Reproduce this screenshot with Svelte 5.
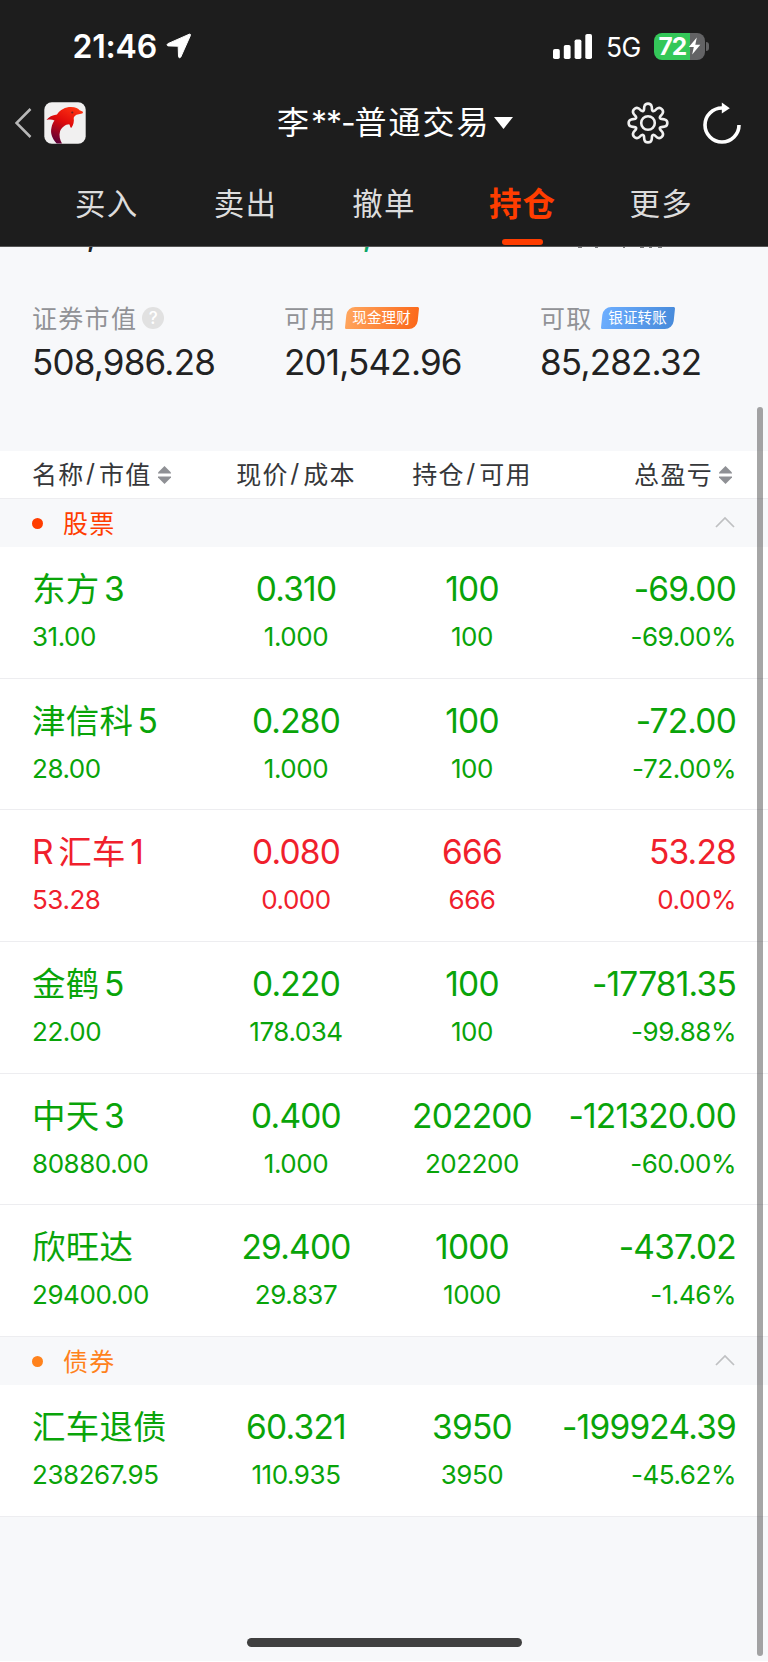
<script>
    let tabs = ['买入', '卖出', '撤单', '持仓', '更多'];
    let activeTab = '持仓';

    let groups = [
        {
            name: '股票',
            color: 'red',
            open: true,
            items: [
                { name: '东方3', value: '31.00', price: '0.310', cost: '1.000', amount: '100', usable: '100', profit: '-69.00', percent: '-69.00%' },
                { name: '津信科5', value: '28.00', price: '0.280', cost: '1.000', amount: '100', usable: '100', profit: '-72.00', percent: '-72.00%' },
                { name: 'R汇车1', value: '53.28', price: '0.080', cost: '0.000', amount: '666', usable: '666', profit: '53.28', percent: '0.00%' },
                { name: '金鹤5', value: '22.00', price: '0.220', cost: '178.034', amount: '100', usable: '100', profit: '-17781.35', percent: '-99.88%' },
                { name: '中天3', value: '80880.00', price: '0.400', cost: '1.000', amount: '202200', usable: '202200', profit: '-121320.00', percent: '-60.00%' },
                { name: '欣旺达', value: '29400.00', price: '29.400', cost: '29.837', amount: '1000', usable: '1000', profit: '-437.02', percent: '-1.46%' }
            ]
        },
        {
            name: '债券',
            color: 'orange',
            open: true,
            items: [
                { name: '汇车退债', value: '238267.95', price: '60.321', cost: '110.935', amount: '3950', usable: '3950', profit: '-199924.39', percent: '-45.62%' }
            ]
        }
    ];

    function toggleGroup(group) {
        group.open = !group.open;
        groups = groups;
    }

    // latin and chinese parts, so there can be a small gap between them
    function splitName(name) {
        return name.match(/[A-Za-z0-9]+|[^A-Za-z0-9]+/g);
    }
</script>

{#snippet sortIcon()}
    <svg class="sort-icon" width="13" height="18" viewBox="0 0 13 18" aria-hidden="true">
        <path d="M6.5 0 13 6.5V7.6H0V6.500Z" />
        <path d="M6.500 18 13 11.500V10.400H0V11.500Z" />
    </svg>
{/snippet}

<main>
    <header>
        <div class="status-bar">
            <span class="clock">21:46</span>
            <svg class="location" width="26" height="26" viewBox="0 0 26 26" aria-hidden="true">
                <path d="M23.300 1.200 1.800 10.700C.7 11.300 1 12.800 2.200 12.900L12.200 13.200 12.500 23.500C12.600 24.900 14.200 25.200 14.800 24L24.400 2.500C24.800 1.500 24.200.9 23.300 1.200Z" fill="#fff" stroke="#fff" stroke-width="1" />
            </svg>
            <svg class="signal" width="39" height="25" viewBox="0 0 39 25" fill="#fff" aria-hidden="true">
                <rect x="0" y="15" width="6.800" height="10" rx="1.800" />
                <rect x="10.800" y="11" width="6.800" height="14" rx="1.800" />
                <rect x="21.600" y="5.500" width="6.800" height="19.500" rx="1.800" />
                <rect x="32.300" y="0" width="6.700" height="25" rx="1.800" />
            </svg>
            <span class="network">5G</span>
            <div class="battery">
                <span>72</span>
                <svg width="13" height="18" viewBox="0 0 13 18" aria-hidden="true">
                    <path d="M8.800.5.8 10H5.800L4.200 17.500 12.300 7.700H7.300Z" fill="#fff" />
                </svg>
            </div>
            <i class="battery-cap"></i>
        </div>

        <nav class="title-bar">
            <svg class="back" width="17" height="30" viewBox="0 0 17 30" aria-hidden="true">
                <path d="M15.500 1 1.500 15 15.500 29" fill="none" stroke="#b8b8b8" stroke-width="2.500" />
            </svg>
            <svg class="logo" width="42" height="42" viewBox="0 0 42 42" aria-hidden="true">
                <defs>
                    <linearGradient id="dolphin" x1="0.800" y1="0" x2="0.300" y2="1">
                        <stop offset="0" stop-color="#ff3412" />
                        <stop offset=".45" stop-color="#e00b0b" />
                        <stop offset="1" stop-color="#5a0038" />
                    </linearGradient>
                </defs>
                <rect x=".3" y=".3" width="41.400" height="41.400" rx="7.500" fill="#f1f0f0" />
                <path d="M2.500 18C4.500 15 8.500 13 13 12.500 16 7.500 21.500 5 27 5 31.500 5 34.500 6.500 35.500 8.300L38.500 9.500C39.300 10.200 39 11.200 38 11.500L32.500 12.800C31 14 30 14.800 29.700 16 30.300 19.500 29.500 23 27.200 26 25.800 25.200 26.300 23.400 25.200 22.300 21.500 22.400 17.300 25.500 16 29.500 14.800 33.500 16 38 18 41.600H12.700C8.500 37 6 31.500 7.500 25.500 8 22.800 9 20.300 10.500 18.500 8 17.300 5.500 17.300 2.500 18Z" fill="url(#dolphin)" />
                <circle cx="28.300" cy="10.500" r="1.100" fill="#722" />
            </svg>
            <h1>李<span>**-</span>普通交易</h1>
            <svg class="caret" width="19" height="12" viewBox="0 0 19 12" aria-hidden="true">
                <path d="M0 0H19L9.500 12Z" fill="#fff" />
            </svg>
            <svg class="gear" width="42" height="42" viewBox="0 0 42 42" fill="none" stroke="#f0f0f0" stroke-width="2.600" aria-hidden="true">
                <path d="M16.800 8.300C17.300 6.900 17 5.500 17.400 4.200 18.300.8 23.700.8 24.600 4.200 25 5.500 24.700 6.900 25.200 8.300 25.700 9.200 26.500 9.300 27.300 8.900 28.500 8.300 29.300 7 30.500 6.400 33.600 4.800 37.200 8.400 35.600 11.500 35 12.700 33.700 13.500 33.100 14.700 32.700 15.500 32.800 16.300 33.700 16.800 35.100 17.300 36.500 17 37.800 17.400 41.200 18.300 41.200 23.700 37.800 24.600 36.500 25 35.100 24.700 33.700 25.200 32.800 25.700 32.700 26.500 33.100 27.300 33.700 28.500 35 29.300 35.600 30.500 37.200 33.600 33.600 37.200 30.500 35.600 29.300 35 28.500 33.700 27.300 33.100 26.500 32.700 25.700 32.800 25.200 33.700 24.700 35.100 25 36.500 24.600 37.800 23.700 41.200 18.300 41.200 17.400 37.800 17 36.500 17.300 35.100 16.800 33.700 16.300 32.800 15.500 32.700 14.700 33.100 13.500 33.700 12.700 35 11.500 35.600 8.400 37.200 4.800 33.600 6.400 30.500 7 29.300 8.300 28.500 8.900 27.300 9.300 26.500 9.200 25.700 8.300 25.200 6.900 24.700 5.500 25 4.200 24.600.8 23.700.8 18.300 4.200 17.400 5.500 17 6.900 17.300 8.300 16.800 9.200 16.300 9.300 15.500 8.900 14.700 8.300 13.500 7 12.700 6.400 11.500 4.800 8.400 8.400 4.800 11.500 6.400 12.700 7 13.500 8.300 14.700 8.900 15.500 9.300 16.300 9.200 16.800 8.300Z" />
                <circle cx="21" cy="21" r="6.800" />
            </svg>
            <svg class="refresh" width="40" height="42" viewBox="0 0 40 42" aria-hidden="true">
                <path d="M37 23A17 17 0 1 1 20 6H24" fill="none" stroke="#fff" stroke-width="3.600" />
                <path d="M19.800 .5 27.800 6.200 19.800 11.500Z" fill="#fff" />
            </svg>
        </nav>

        <div class="tabs">
            {#each tabs as tab}
                <button class:active={tab === activeTab} on:click={() => (activeTab = tab)}>{tab}</button>
            {/each}
        </div>
    </header>

    <!-- bottom edge of the totals row, scrolled under the header -->
    <div class="scrolled-row">
        <span class="total">,</span>
        <span class="today">,</span>
        <svg width="90" height="2" viewBox="0 0 90 2" aria-hidden="true">
            <path d="M2 .5H6M19 .5H22M47 .5H49M64 .5H68M73 .5H76M82 .5H86" stroke="#77787a" />
        </svg>
    </div>

    <section class="summary">
        <div class="asset">
            <p>证券市值<i class="help">?</i></p>
            <strong>508,986.28</strong>
        </div>
        <div class="asset">
            <p>可用<span class="badge orange">现金理财</span></p>
            <strong>201,542.96</strong>
        </div>
        <div class="asset">
            <p>可取<span class="badge blue">银证转账</span></p>
            <strong>85,282.32</strong>
        </div>
    </section>

    <section class="holdings">
        <div class="grid table-head">
            <span>名称<i>/</i>市值{@render sortIcon()}</span>
            <span>现价<i>/</i>成本</span>
            <span>持仓<i>/</i>可用</span>
            <span>总盈亏{@render sortIcon()}</span>
        </div>

        {#each groups as group}
            <button class="group {group.color}" on:click={() => toggleGroup(group)}>
                <i class="dot"></i>
                <span>{group.name}</span>
                <svg class:closed={!group.open} width="20" height="12" viewBox="0 0 20 12" aria-hidden="true">
                    <path d="M1 11 10 2 19 11" fill="none" stroke="#bfc0c2" stroke-width="1.700" />
                </svg>
            </button>

            {#if group.open}
                {#each group.items as item}
                    <div class="grid item" class:up={!item.profit.startsWith('-')}>
                        <div>
                            <b class="name">
                                {#each splitName(item.name) as part}
                                    <span>{part}</span>
                                {/each}
                            </b>
                            <small>{item.value}</small>
                        </div>
                        <div><b>{item.price}</b><small>{item.cost}</small></div>
                        <div><b>{item.amount}</b><small>{item.usable}</small></div>
                        <div class="profit"><b>{item.profit}</b><small>{item.percent}</small></div>
                    </div>
                {/each}
            {/if}
        {/each}
    </section>

    <i class="scrollbar"></i>
    <i class="home-indicator"></i>
</main>

<style>
    :global(body) {
        margin: 0;
        background: #f7f8fa;
    }

    main {
        position: relative;
        box-sizing: border-box;
        width: 768px;
        height: 1662px;
        overflow: hidden;
        background: #f7f8fa;
        border-bottom: 1px solid #fff;
        font-family: Inter, "Noto Sans CJK SC", sans-serif;
    }

    h1, p {
        margin: 0;
        font-weight: 400;
    }

    svg {
        display: block;
        flex: none;
    }

    button {
        border: none;
        padding: 0;
        background: none;
        font-family: inherit;
    }

    header {
        box-sizing: border-box;
        height: 247px;
        background: #1d1d1d;
        border-bottom: 1px solid #555;
        color: #fff;
    }

    .status-bar {
        display: flex;
        align-items: center;
        height: 92px;
        padding-left: 72.500px;

        & .clock {
            width: 93.500px;
            font-size: 32px;
            font-weight: 600;
            letter-spacing: -.2px;
        }

        & .signal {
            margin-left: 361px;
        }

        & .network {
            width: 47.500px;
            margin: 1px 0 0 14px;
            font-size: 26.500px;
            letter-spacing: -.5px;
        }
    }

    .battery {
        display: flex;
        align-items: center;
        width: 51px;
        height: 27px;
        border-radius: 8px;
        background: linear-gradient(to right, #34c759 36px, #636365 36px);

        & span {
            width: 29.500px;
            margin-left: 5px;
            font-size: 24.500px;
            font-weight: 700;
            line-height: 27px;
            letter-spacing: -1px;
        }
    }

    .battery-cap {
        width: 3px;
        height: 9px;
        margin-left: 1.500px;
        border-radius: 0 4px 4px 0;
        background: #636365;
    }

    .title-bar {
        display: flex;
        align-items: center;
        height: 62px;
        padding-left: 15px;

        & .logo {
            margin-left: 12px;
        }

        & h1 {
            width: 216px;
            margin-left: 191px;
            font-size: 32px;
            line-height: 62px;
            letter-spacing: 2px;
            white-space: nowrap;
        }

        & h1 span {
            letter-spacing: -1.100px;
        }

        & .caret {
            margin-left: 1px;
        }

        & .gear {
            margin-left: 114px;
        }

        & .refresh {
            margin-left: 33px;
        }
    }

    .tabs {
        display: flex;
        height: 92px;
        padding: 0 37.500px;

        & button {
            position: relative;
            flex: 1;
            padding-top: 3px;
            color: #dcdcdc;
            font-size: 30.500px;
            letter-spacing: 1.200px;
        }

        & .active {
            color: #ff3d00;
            font-size: 32.500px;
            font-weight: 700;
        }

        & .active::after {
            content: '';
            position: absolute;
            left: 50%;
            bottom: 1px;
            width: 41px;
            height: 6px;
            margin-left: -20.500px;
            border-radius: 3px;
            background: #ff3d00;
        }
    }

    .scrolled-row {
        display: flex;
        align-items: flex-start;
        height: 5px;
        padding-left: 86px;
        overflow: hidden;
        font-size: 35px;
        line-height: 16px;

        & span {
            width: 276px;
            margin-top: -20px;
            color: #222;
        }

        & .today {
            width: 214px;
            color: #0aa566;
        }
    }

    .summary {
        display: grid;
        grid-template-columns: 252px 256px 1fr;
        height: 153px;
        padding: 46px 0 0 32px;

        & p {
            display: flex;
            align-items: center;
            height: 38px;
            color: #919296;
            font-size: 25px;
            letter-spacing: 1.300px;
        }

        & strong {
            display: block;
            margin-top: 2px;
            color: #222;
            font-size: 35px;
            font-weight: 400;
            line-height: 48px;
            letter-spacing: -.8px;
        }
    }

    .help {
        width: 22px;
        margin: 2px 0 0 5px;
        border-radius: 50%;
        background: #e1e1e1;
        color: #fff;
        font-size: 17px;
        font-style: normal;
        font-weight: 500;
        line-height: 22px;
        letter-spacing: 0;
        text-align: center;
    }

    .badge {
        position: relative;
        z-index: 0;
        width: 74px;
        margin: 2px 0 0 8px;
        color: #fff;
        font-size: 14.500px;
        line-height: 22px;
        letter-spacing: .2px;
        text-align: center;

        &::before {
            content: '';
            position: absolute;
            inset: 0 1px;
            z-index: -1;
            border-radius: 8px 1.500px;
            transform: skewX(-6deg);
        }

        &.orange::before {
            background: linear-gradient(100deg, #ffa75f, #fb6719);
        }

        &.blue::before {
            background: linear-gradient(100deg, #6daeff, #478ada);
        }
    }

    .grid {
        display: grid;
        grid-template-columns: 176px 176px 176px minmax(0, 1fr);
        box-sizing: border-box;
        padding: 0 32px;
        background: #fff;
        border-bottom: 1px solid #ededf0;
    }

    .grid > :nth-child(2),
    .grid > :nth-child(3) {
        text-align: center;
        justify-content: center;
    }

    .table-head {
        height: 48px;
        color: #36373a;
        font-size: 25px;
        letter-spacing: 1.300px;

        & span {
            display: flex;
            align-items: center;
            padding-bottom: 3px;
            white-space: nowrap;
        }

        & span:last-child {
            justify-content: flex-end;
        }

        & i {
            margin: 0 2.500px 0 1.500px;
            font-style: normal;
        }
    }

    .sort-icon {
        margin: 3px 4px 0 6px;
        fill: #8f9095;
    }

    .group {
        display: flex;
        align-items: center;
        width: 100%;
        height: 48.300px;
        padding: 0 33px 0 32px;
        color: #ff3d00;
        font-size: 25px;
        letter-spacing: 1.300px;

        &.orange {
            color: #ff821c;
        }

        & .dot {
            width: 11px;
            height: 11px;
            margin-right: 20px;
            border-radius: 50%;
            background: currentColor;
        }

        & span {
            margin-top: -2px;
        }

        & svg {
            margin: -2px 0 0 auto;
        }

        & .closed {
            transform: rotate(180deg);
        }
    }

    .item {
        height: 131.600px;
        padding-top: 18px;
        color: #09a409;

        &.up {
            color: #f0202c;
        }

        & b,
        & small {
            display: block;
            font-weight: 400;
            white-space: nowrap;
        }

        & b {
            font-size: 33.500px;
            line-height: 48px;
            letter-spacing: -.8px;
        }

        & small {
            margin-top: 4px;
            font-size: 26px;
            line-height: 40px;
            letter-spacing: -.45px;
        }

        & .name {
            display: flex;
            gap: 4.500px;
            letter-spacing: .2px;
        }

        /* long numbers run past the column on the left */
        & .profit {
            display: flex;
            flex-direction: column;
            align-items: flex-end;
        }
    }

    .scrollbar {
        position: absolute;
        top: 407px;
        right: 5.500px;
        width: 5.500px;
        height: 1249px;
        border-radius: 3px;
        background: rgba(60, 60, 62, .46);
    }

    .home-indicator {
        position: absolute;
        bottom: 14px;
        left: 247px;
        width: 275px;
        height: 9px;
        border-radius: 5px;
        background: #404040;
    }
</style>
